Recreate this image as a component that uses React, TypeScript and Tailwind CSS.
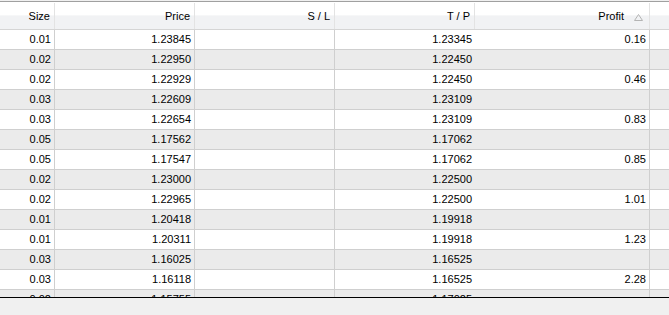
import React from "react";

type Trade = { size: string; price: string; sl: string; tp: string; profit: string };

const trades: Trade[] = [
  { size: "0.01", price: "1.23845", sl: "", tp: "1.23345", profit: "0.16" },
  { size: "0.02", price: "1.22950", sl: "", tp: "1.22450", profit: "" },
  { size: "0.02", price: "1.22929", sl: "", tp: "1.22450", profit: "0.46" },
  { size: "0.03", price: "1.22609", sl: "", tp: "1.23109", profit: "" },
  { size: "0.03", price: "1.22654", sl: "", tp: "1.23109", profit: "0.83" },
  { size: "0.05", price: "1.17562", sl: "", tp: "1.17062", profit: "" },
  { size: "0.05", price: "1.17547", sl: "", tp: "1.17062", profit: "0.85" },
  { size: "0.02", price: "1.23000", sl: "", tp: "1.22500", profit: "" },
  { size: "0.02", price: "1.22965", sl: "", tp: "1.22500", profit: "1.01" },
  { size: "0.01", price: "1.20418", sl: "", tp: "1.19918", profit: "" },
  { size: "0.01", price: "1.20311", sl: "", tp: "1.19918", profit: "1.23" },
  { size: "0.03", price: "1.16025", sl: "", tp: "1.16525", profit: "" },
  { size: "0.03", price: "1.16118", sl: "", tp: "1.16525", profit: "2.28" },
  { size: "0.02", price: "1.15755", sl: "", tp: "1.17025", profit: "" },
];

function SortArrow() {
  return (
    <svg width="9" height="7" viewBox="0 0 9 7" className="ml-[10px] mt-[2px]">
      <path d="M4.5 0.5 L8.5 6.5 L0.5 6.5 Z" fill="none" stroke="#b4b4b4" strokeWidth="1" />
    </svg>
  );
}

function Row({ t, index }: { t: Trade; index: number }) {
  const bg = index % 2 === 0 ? "bg-white" : "bg-[#ebebeb]";
  return (
    <div className={`flex h-[20px] shrink-0 border-b border-[#cfcfcf] ${bg}`}>
      <div className="w-[55px] border-r border-[#cfcfcf] pr-[3px] text-right leading-[19px]">{t.size}</div>
      <div className="w-[140px] border-r border-[#cfcfcf] pr-[3px] text-right leading-[19px]">{t.price}</div>
      <div className="w-[140px] border-r border-[#cfcfcf] pr-[3px] text-right leading-[19px]">{t.sl}</div>
      <div className="w-[140px] pr-[3px] text-right leading-[19px]">{t.tp}</div>
      <div className="w-[175px] border-r border-[#cfcfcf] pr-[3px] text-right leading-[19px]">{t.profit}</div>
      <div className="flex-1" />
    </div>
  );
}

export default function App() {
  return (
    <div
      className="w-[669px] h-[315px] bg-[#f0f0f0] flex flex-col overflow-hidden text-[11px] text-black"
      style={{ fontFamily: '"Liberation Sans", Arial, sans-serif' }}
    >
      <div className="h-px bg-[#f0f0f0]" />
      <div className="h-px bg-[#a0a0a0]" />
      <div className="h-px bg-white" />

      {/* header */}
      <div className="flex h-[27px] shrink-0 border-b border-[#d5d5d5] bg-[linear-gradient(to_bottom,#ffffff_0%,#ffffff_45%,#f1f2f4_50%,#f1f2f4_100%)]">
        <div className="w-[55px] border-r border-[#e3e3e3] pr-[4px] text-right leading-[26px]">Size</div>
        <div className="w-[140px] border-r border-[#e3e3e3] pr-[4px] text-right leading-[26px]">Price</div>
        <div className="w-[140px] border-r border-[#e3e3e3] pr-[4px] text-right leading-[26px]">S / L</div>
        <div className="w-[140px] border-r border-[#e3e3e3] pr-[4px] text-right leading-[26px]">T / P</div>
        <div className="w-[175px] border-r border-[#e3e3e3] pr-[6px] flex items-center justify-end">
          <span className="leading-[26px]">Profit</span>
          <SortArrow />
        </div>
        <div className="flex-1" />
      </div>

      {/* rows */}
      <div className="h-[267px] shrink-0 overflow-hidden flex flex-col bg-white">
        {trades.map((t, i) => (
          <Row key={i} t={t} index={i} />
        ))}
      </div>

      <div className="h-px bg-black shrink-0" />
      <div className="flex-1 bg-[#f0f0f0]" />
    </div>
  );
}
